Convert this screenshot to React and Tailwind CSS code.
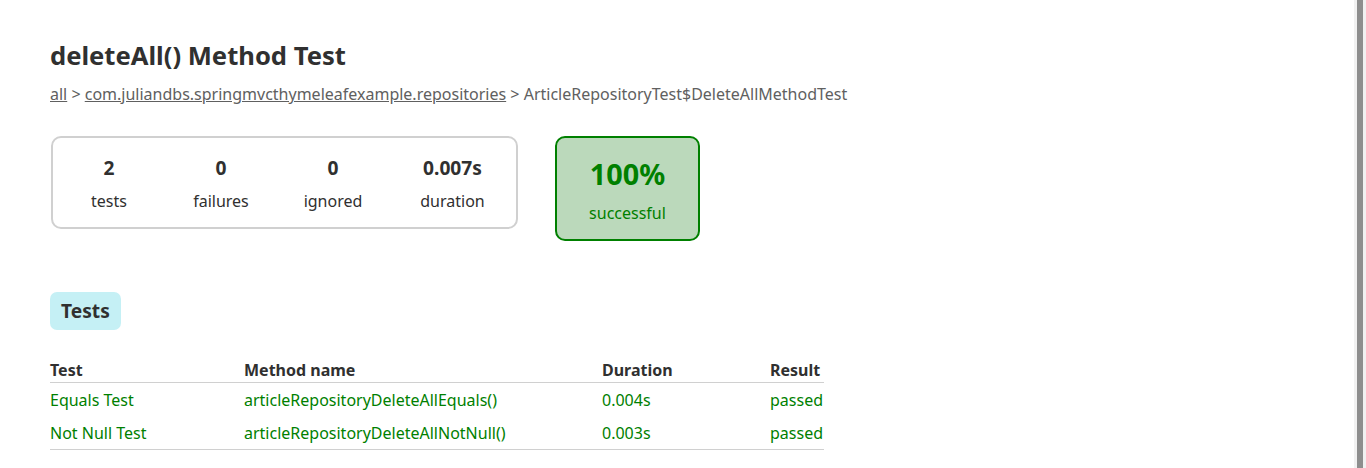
import React from 'react';

const counters = [
    { value: '2', label: 'tests', width: 'w-[112px]' },
    { value: '0', label: 'failures', width: 'w-[112px]' },
    { value: '0', label: 'ignored', width: 'w-[112px]' },
    { value: '0.007s', label: 'duration', width: 'w-[127px]' },
];

const tests = [
    { name: 'Equals Test', method: 'articleRepositoryDeleteAllEquals()', duration: '0.004s', result: 'passed' },
    { name: 'Not Null Test', method: 'articleRepositoryDeleteAllNotNull()', duration: '0.003s', result: 'passed' },
];

const cols = 'grid grid-cols-[194px_358px_168px_54px]';

const App = () => {
    return (
        <div className="h-[468px] overflow-hidden bg-white font-['Noto_Sans',sans-serif] text-[#303030]">
            <div className="px-[50px] pt-[38px]">
                <h1 className="text-[25.6px] font-bold leading-[36px]">deleteAll() Method Test</h1>

                <div className="mt-[9px] text-[16px] leading-[22px] text-[#606060]">
                    <a className="underline">all</a> &gt;{' '}
                    <a className="underline">com.juliandbs.springmvcthymeleafexample.repositories</a> &gt;{' '}
                    ArticleRepositoryTest$DeleteAllMethodTest
                </div>

                <div className="mt-[31px] ml-[1px] flex items-start gap-[37px]">
                    <div className="flex rounded-[10px] border-2 border-[#d0d0d0]">
                        {counters.map(c => (
                            <div key={c.label} className={`${c.width} pt-[16px] pb-[15px] text-center`}>
                                <p className="text-[19.2px] font-bold leading-[28px]">{c.value}</p>
                                <p className="mt-[8px] text-[16px] leading-[22px]">{c.label}</p>
                            </div>
                        ))}
                    </div>

                    <div className="w-[145px] rounded-[10px] border-2 border-[#008000] bg-[#bbd9bb] pt-[16px] pb-[15px] text-center text-[#008000]">
                        <p className="text-[28.8px] font-bold leading-[40px]">100%</p>
                        <p className="mt-[8px] text-[16px] leading-[22px]">successful</p>
                    </div>
                </div>

                <div className="mt-[51px] flex">
                    <div className="flex h-[38px] items-center rounded-[7px] bg-[#c5f0f5] px-[11px]">
                        <h2 className="text-[19.2px] font-bold">Tests</h2>
                    </div>
                </div>

                <div className="mt-[28px] w-[774px] text-[16px]">
                    <div className={`${cols} h-[25px] items-center border-b border-[#d0d0d0] font-bold`}>
                        <span>Test</span>
                        <span>Method name</span>
                        <span>Duration</span>
                        <span>Result</span>
                    </div>
                    <div className="border-b border-[#d0d0d0] text-[#008000]">
                        {tests.map(t => (
                            <div key={t.method} className={`${cols} h-[33px] items-center`}>
                                <span>{t.name}</span>
                                <span>{t.method}</span>
                                <span>{t.duration}</span>
                                <span>{t.result}</span>
                            </div>
                        ))}
                    </div>
                </div>
            </div>

            {/* fake scrollbar */}
            <div className="fixed top-0 right-0 flex h-[468px] w-[12px] justify-center bg-[#f1f1f1]">
                <div className="h-full w-[6px] bg-[#8e8e8e]"></div>
            </div>
        </div>
    );
};

export default App;
